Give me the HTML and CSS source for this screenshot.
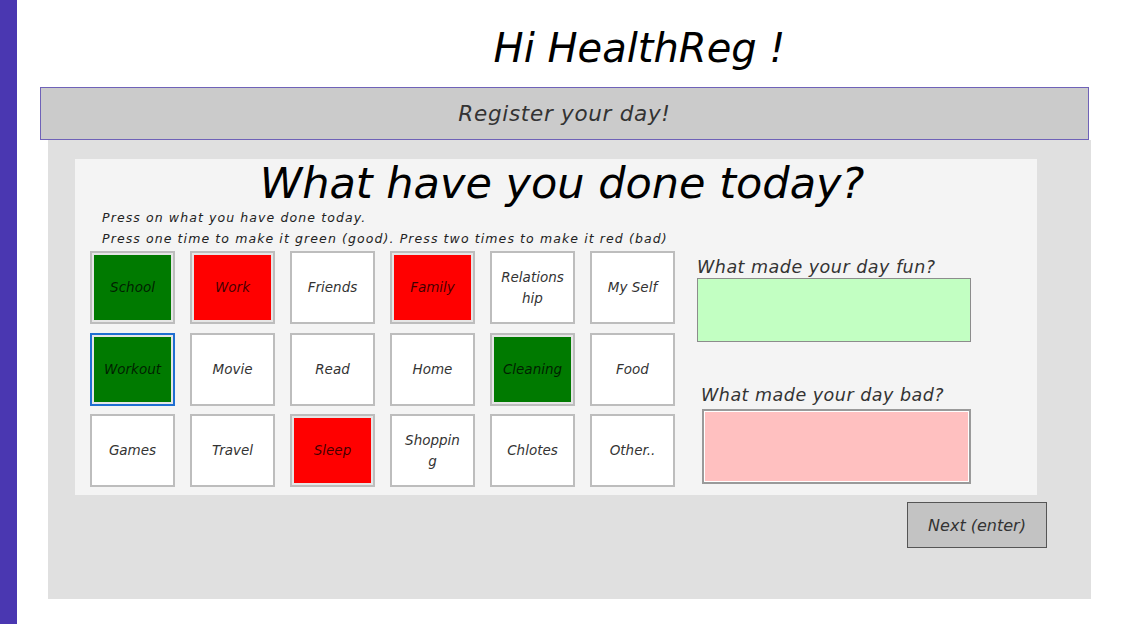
FILE: index.html
```html
<!DOCTYPE html>
<html lang="en">
<head>
<meta charset="utf-8">
<title>HealthReg</title>
<link rel="stylesheet" href="styles.css">
</head>
<body>
<div class="sidebar"></div>
<div class="main">
  <h1 class="greeting">Hi HealthReg !</h1>
  <div class="band">Register your day!</div>
  <div class="panel">
    <div class="card">
      <h2 class="question">What have you done today?</h2>
      <div class="card-body">
        <div class="left">
          <p class="hint">Press on what you have done today.</p>
          <p class="hint">Press one time to make it green (good). Press two times to make it red (bad)</p>
          <div class="tiles">
            <button class="tile good"><span>School</span></button>
            <button class="tile bad"><span>Work</span></button>
            <button class="tile"><span>Friends</span></button>
            <button class="tile bad"><span>Family</span></button>
            <button class="tile"><span>Relations<br>hip</span></button>
            <button class="tile"><span>My Self</span></button>
            <button class="tile good focus"><span>Workout</span></button>
            <button class="tile"><span>Movie</span></button>
            <button class="tile"><span>Read</span></button>
            <button class="tile"><span>Home</span></button>
            <button class="tile good"><span>Cleaning</span></button>
            <button class="tile"><span>Food</span></button>
            <button class="tile"><span>Games</span></button>
            <button class="tile"><span>Travel</span></button>
            <button class="tile bad"><span>Sleep</span></button>
            <button class="tile"><span>Shoppin<br>g</span></button>
            <button class="tile"><span>Chlotes</span></button>
            <button class="tile"><span>Other..</span></button>
          </div>
        </div>
        <div class="right">
          <label class="q-label">What made your day fun?</label>
          <div class="box fun"></div>
          <label class="q-label bad-label">What made your day bad?</label>
          <div class="box badbox"></div>
        </div>
      </div>
    </div>
    <div class="actions">
      <button class="next">Next (enter)</button>
    </div>
  </div>
</div>
</body>
</html>
```

FILE: styles.css
```css
* { box-sizing: border-box; }
html, body { margin: 0; padding: 0; }
body {
  display: flex;
  width: 1125px;
  height: 624px;
  background: #ffffff;
  font-family: "DejaVu Sans", "Liberation Sans", sans-serif;
  font-style: italic;
  color: #333;
  overflow: hidden;
}
.sidebar {
  width: 17px;
  flex: none;
  background: #4a37b1;
}
.main {
  flex: 1;
  padding-left: 23px;
  padding-right: 36px;
}
.greeting {
  margin: 0;
  height: 87px;
  padding: 24px 0 0 150px;
  text-align: center;
  font-weight: normal;
  font-size: 40px;
  line-height: 48px;
  color: #000;
}
.band {
  height: 53px;
  background: #cbcbcb;
  border: 1px solid #6f62b8;
  text-align: center;
  font-size: 21.5px;
  letter-spacing: 0.7px;
  line-height: 51px;
  color: #333;
}
.panel {
  margin-left: 8px;
  margin-right: -2px;
  height: 459px;
  background: #e0e0e0;
  padding: 19px 0 0 27px;
}
.card {
  width: 962px;
  height: 336px;
  background: #f4f4f4;
  padding-top: 1px;
}
.question {
  margin: 0;
  text-align: center;
  font-weight: normal;
  font-size: 43px;
  line-height: 47px;
  color: #000;
  padding-left: 12px;
}
.card-body {
  display: flex;
  padding-left: 15px;
}
.left { width: 605px; }
.hint {
  margin: 0 0 0 12px;
  font-size: 12.5px;
  letter-spacing: 1.1px;
  line-height: 21px;
  color: #222;
  white-space: nowrap;
}
.tiles {
  display: grid;
  grid-template-columns: repeat(6, 85px);
  grid-auto-rows: 73px;
  column-gap: 15px;
  row-gap: 8.5px;
  margin-top: 2px;
}
.tile {
  font: inherit;
  font-size: 13.5px;
  line-height: 21px;
  color: #333;
  border: 2px solid #bdbdbd;
  background: #fff;
  padding: 0;
  display: flex;
  align-items: center;
  justify-content: center;
  text-align: center;
}
.tile.good, .tile.bad { padding: 2px; background: #e6e6e6; }
.tile.good span, .tile.bad span {
  width: 100%;
  height: 100%;
  display: flex;
  align-items: center;
  justify-content: center;
  color: rgba(0, 0, 0, 0.75);
}
.tile.good span { background: #007a00; }
.tile.bad span { background: #ff0000; }
.tile.focus { border-color: #1f6fd1; }
.right {
  padding-left: 2px;
  padding-top: 50px;
  width: 300px;
}
.q-label {
  display: block;
  font-size: 17.5px;
  letter-spacing: 0.5px;
  line-height: 20px;
  color: #333;
}
.box {
  width: 274px;
  border: 1px solid #8c8c8c;
}
.fun {
  height: 64px;
  background: #c2ffc2;
  margin-top: 1px;
}
.bad-label {
  margin-top: 43px;
  padding-left: 4px;
}
.badbox {
  margin-left: 5px;
  width: 269px;
  height: 75px;
  margin-top: 4px;
  background: #ffc0c0;
  border: 2px solid #9a9a9a;
  box-shadow: inset 0 0 0 1px #fff;
}
.actions {
  display: flex;
  justify-content: flex-end;
  padding-right: 44px;
  margin-top: 7px;
}
.next {
  width: 140px;
  height: 46px;
  background: #c3c3c3;
  border: 1px solid #555;
  font: inherit;
  font-size: 16px;
  color: #333;
}
```
